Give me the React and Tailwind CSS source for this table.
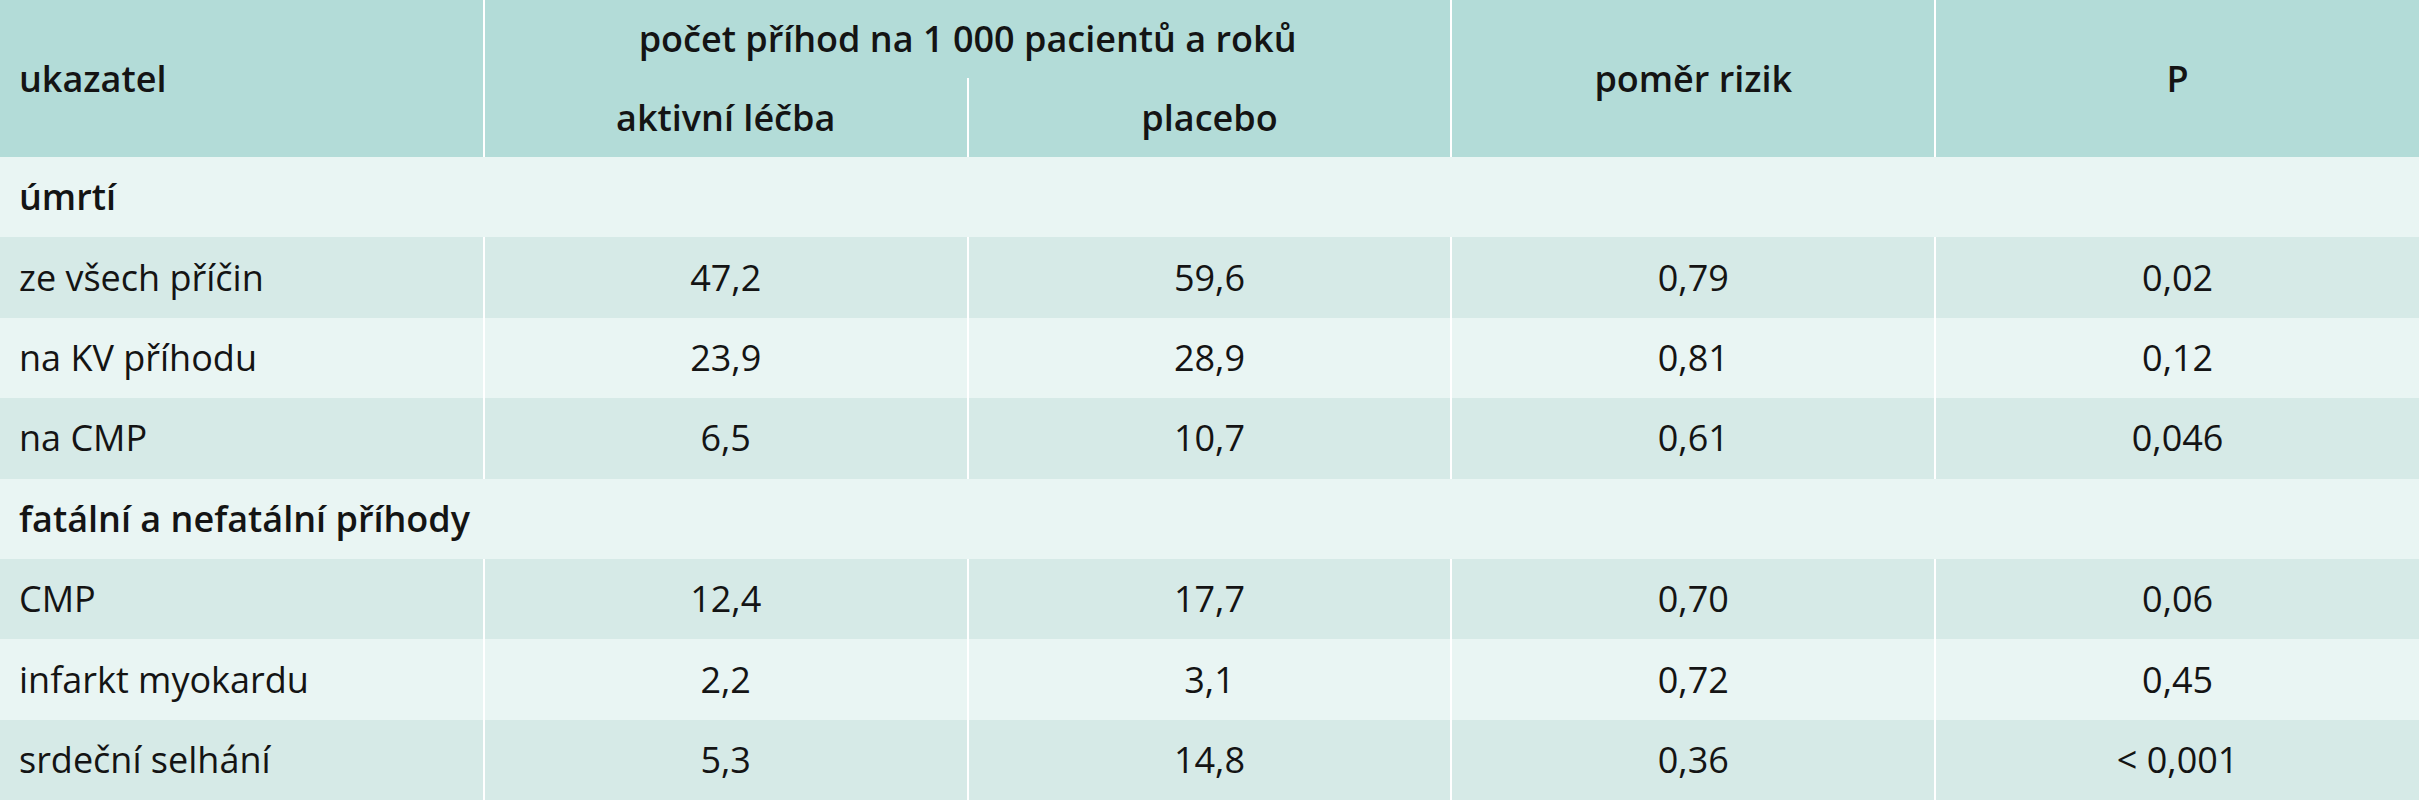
import React from 'react';

const rows = [
  { section: 'úmrtí' },
  { label: 'ze všech příčin', active: '47,2', placebo: '59,6', hr: '0,79', p: '0,02' },
  { label: 'na KV příhodu', active: '23,9', placebo: '28,9', hr: '0,81', p: '0,12' },
  { label: 'na CMP', active: '6,5', placebo: '10,7', hr: '0,61', p: '0,046' },
  { section: 'fatální a nefatální příhody' },
  { label: 'CMP', active: '12,4', placebo: '17,7', hr: '0,70', p: '0,06' },
  { label: 'infarkt myokardu', active: '2,2', placebo: '3,1', hr: '0,72', p: '0,45' },
  { label: 'srdeční selhání', active: '5,3', placebo: '14,8', hr: '0,36', p: '< 0,001' },
];

export default function App() {
  return (
    <div className="w-[2419px] h-[800px] bg-white overflow-hidden font-['Open_Sans',sans-serif] text-[36px] text-[#141414]">
      <table className="w-full table-fixed border-collapse">
        <colgroup>
          <col className="w-1/5" />
          <col className="w-1/5" />
          <col className="w-1/5" />
          <col className="w-1/5" />
          <col className="w-1/5" />
        </colgroup>
        <thead className="bg-[#b3dcd8] font-semibold">
          <tr className="h-[78px]">
            <th rowSpan={2} className="text-left pl-[19px] font-semibold">
              ukazatel
            </th>
            <th colSpan={2} className="border-l-2 border-white font-semibold">
              počet příhod na 1 000 pacientů a roků
            </th>
            <th rowSpan={2} className="border-l-2 border-white font-semibold">
              poměr rizik
            </th>
            <th rowSpan={2} className="border-l-2 border-white font-semibold">
              P
            </th>
          </tr>
          <tr className="h-[79px]">
            <th className="border-l-2 border-white font-semibold">aktivní léčba</th>
            <th className="border-l-2 border-white font-semibold">placebo</th>
          </tr>
        </thead>
        <tbody>
          {rows.map((r, i) => {
            const bg = i % 2 === 0 ? 'bg-[#e9f5f3]' : 'bg-[#d6eae7]';
            if (r.section) {
              return (
                <tr key={i} className={`h-[80.4px] ${bg}`}>
                  <td colSpan={5} className="pl-[19px] font-semibold">
                    {r.section}
                  </td>
                </tr>
              );
            }
            return (
              <tr key={i} className={`h-[80.4px] ${bg}`}>
                <td className="pl-[19px]">{r.label}</td>
                <td className="text-center border-l-2 border-white">{r.active}</td>
                <td className="text-center border-l-2 border-white">{r.placebo}</td>
                <td className="text-center border-l-2 border-white">{r.hr}</td>
                <td className="text-center border-l-2 border-white">{r.p}</td>
              </tr>
            );
          })}
        </tbody>
      </table>
    </div>
  );
}
